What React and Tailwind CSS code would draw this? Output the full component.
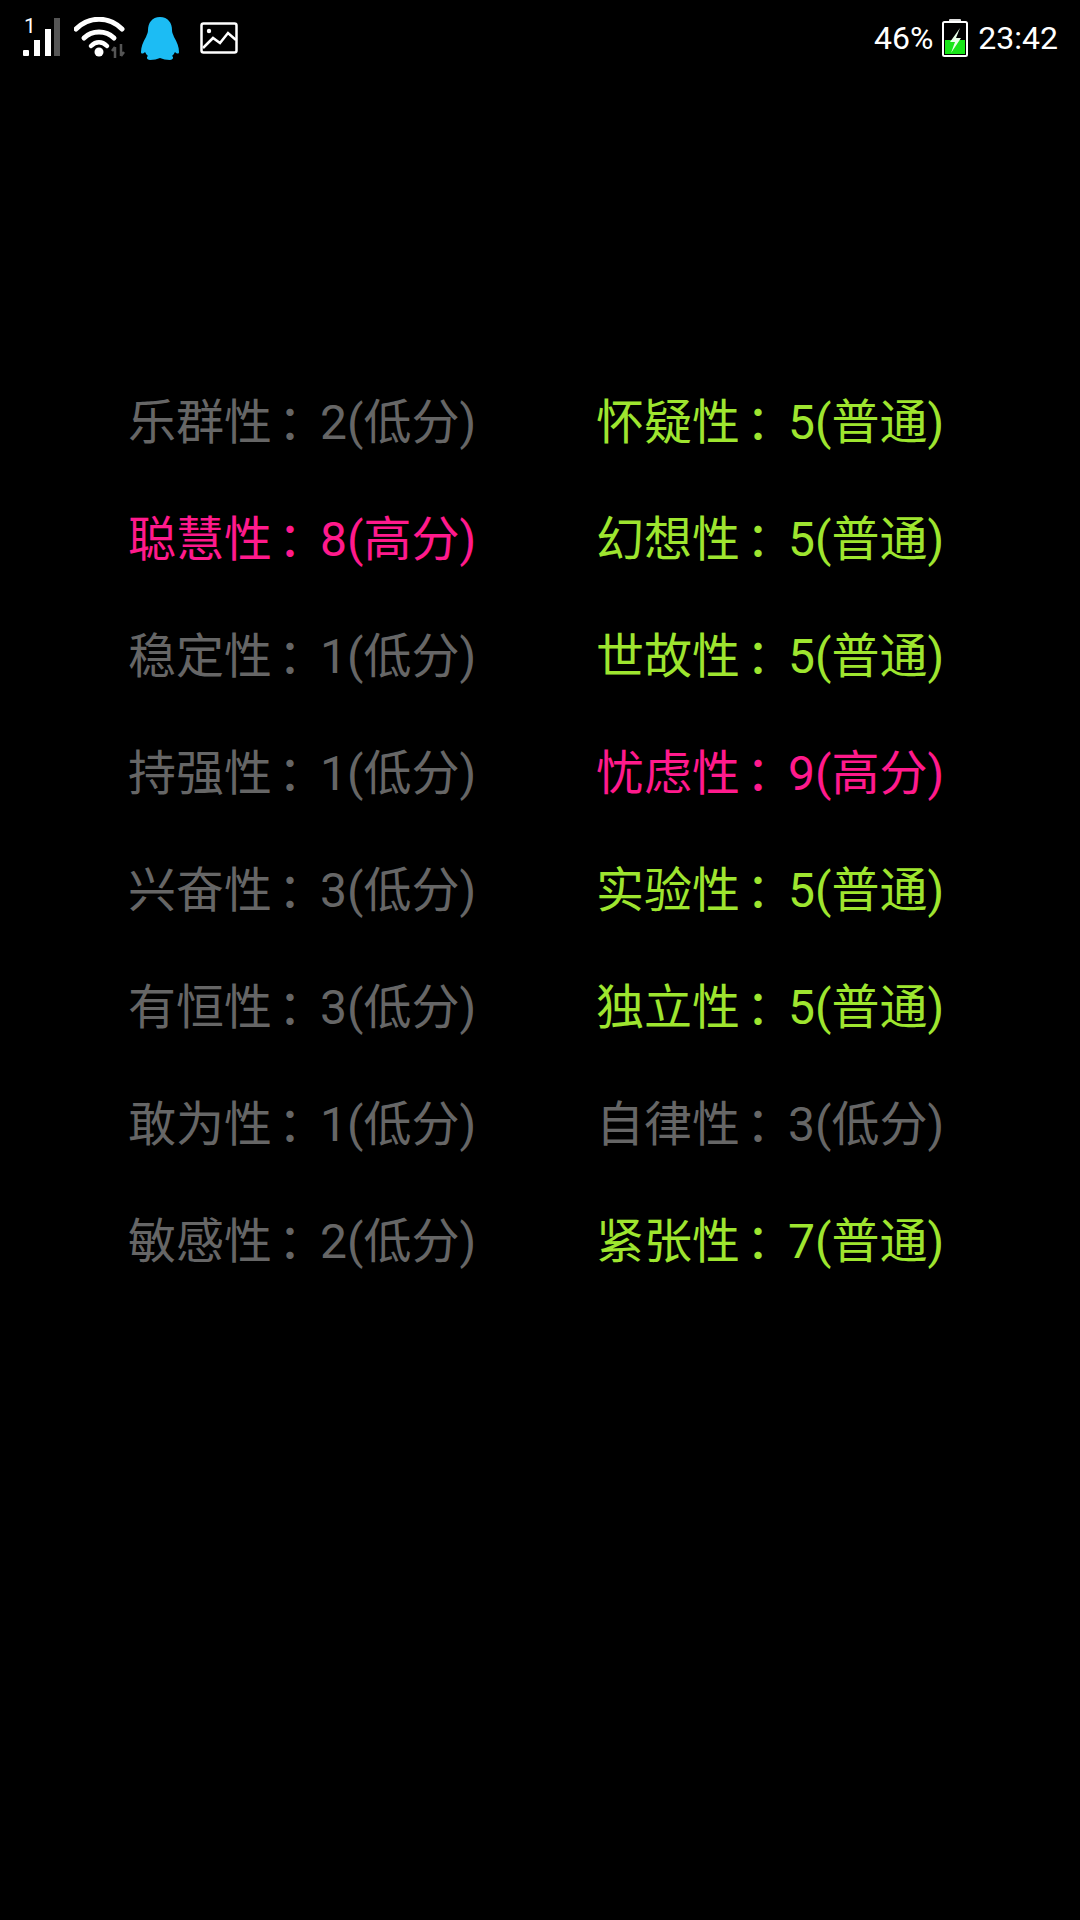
const font = { fontFamily: '"Roboto", "Noto Sans CJK SC", sans-serif' };

const rows = [
  [['乐群性', '2(低分)', 'low'], ['怀疑性', '5(普通)', 'mid']],
  [['聪慧性', '8(高分)', 'high'], ['幻想性', '5(普通)', 'mid']],
  [['稳定性', '1(低分)', 'low'], ['世故性', '5(普通)', 'mid']],
  [['持强性', '1(低分)', 'low'], ['忧虑性', '9(高分)', 'high']],
  [['兴奋性', '3(低分)', 'low'], ['实验性', '5(普通)', 'mid']],
  [['有恒性', '3(低分)', 'low'], ['独立性', '5(普通)', 'mid']],
  [['敢为性', '1(低分)', 'low'], ['自律性', '3(低分)', 'low']],
  [['敏感性', '2(低分)', 'low'], ['紧张性', '7(普通)', 'mid']],
];

const colors = {
  low: 'text-[#666666]',
  mid: 'text-[#9ee52f]',
  high: 'text-[#ff1a8c]',
};

const Signal = () => (
  <svg width="42" height="50" viewBox="0 -4 42 50" className="block">
    <text x="1" y="16" fill="#fff" fontSize="21" style={font}>1</text>
    <rect x="0" y="33" width="6" height="6" rx="1" fill="#fff" />
    <rect x="11" y="23" width="6" height="16" fill="#fff" />
    <rect x="22" y="12" width="6" height="27" fill="#fff" />
    <rect x="31" y="1" width="6" height="38" fill="#555" />
  </svg>
);

const Wifi = () => (
  <svg width="54" height="42" viewBox="0 0 54 42" className="block">
    <path d="M2 12 C15 -1 35 -1 48 12" fill="none" stroke="#fff" strokeWidth="5" strokeLinecap="round" />
    <path d="M10 21 C18 13 32 13 40 21" fill="none" stroke="#fff" strokeWidth="5" strokeLinecap="round" />
    <path d="M17 29 C22 24 28 24 33 29" fill="none" stroke="#fff" strokeWidth="4.5" strokeLinecap="round" />
    <circle cx="25" cy="35" r="4.5" fill="#fff" />
    <path d="M41 41 V30 M38 34 L41 30 M47 27 V39 M47 39 L50 35" fill="none" stroke="#555" strokeWidth="2.5" />
  </svg>
);

const Penguin = () => (
  <svg width="40" height="44" viewBox="0 0 40 44" className="block">
    <path
      d="M20 0 C28 0 32 6 32 13 C32 16 33 17 34 20 C37 25 39 30 39 35 C39 37 37 37 35 35 C34 37 33 38 32 39 C34 40 33 43 30 43 C26 43 23 42 20 41 C17 42 14 43 10 43 C7 43 6 40 8 39 C7 38 6 37 5 35 C3 37 1 37 1 35 C1 30 3 25 6 20 C7 17 8 16 8 13 C8 6 12 0 20 0 Z"
      fill="#1cbcf4"
    />
  </svg>
);

const ImageIcon = () => (
  <svg width="38" height="32" viewBox="0 0 38 32" className="block">
    <rect x="1.5" y="1.5" width="35" height="29" rx="2" fill="none" stroke="#fff" strokeWidth="2.5" />
    <circle cx="9" cy="9" r="2.2" fill="#fff" />
    <path d="M3 26 L13 16 L20 21 L28 11 L36 18" fill="none" stroke="#fff" strokeWidth="2.5" />
  </svg>
);

const Battery = () => (
  <svg width="26" height="38" viewBox="0 0 26 38" className="block">
    <rect x="7" y="0" width="12" height="3" rx="1" fill="#ddd" />
    <rect x="1" y="3" width="24" height="34" rx="1.5" fill="none" stroke="#fff" strokeWidth="2" />
    <rect x="3" y="21" width="20" height="14" fill="#19e619" />
    <path d="M18 9 L8 23 L13 23 L9 34 L19 19 L14 19 Z" fill="#e8ffe8" />
  </svg>
);

export default function App() {
  return (
    <div className="w-[1080px] h-[1920px] bg-black overflow-hidden" style={font}>
      {/* status bar */}
      <div className="h-[75px] flex items-center justify-between pl-[23px] pr-[22px] text-white">
        <div className="flex items-center">
          <Signal />
          <div className="ml-[9px]"><Wifi /></div>
          <div className="ml-[12px] mt-[2px]"><Penguin /></div>
          <div className="ml-[20px]"><ImageIcon /></div>
        </div>
        <div className="flex items-center">
          <span className="text-[32px]">46%</span>
          <div className="ml-[9px]"><Battery /></div>
          <span className="ml-[10px] text-[32px]">23:42</span>
        </div>
      </div>

      {/* score list */}
      <div className="mt-[289px] pl-[128px] flex flex-col">
        {rows.map((row, i) => (
          <div key={i} className="h-[117px] grid grid-cols-[468px_1fr] items-center text-[48px] leading-[117px]">
            {row.map(([name, score, level]) => (
              <div key={name} className={`whitespace-nowrap ${colors[level]}`}>
                {name}<span className="pl-[6px] tracking-[-6px]">：</span>{score}
              </div>
            ))}
          </div>
        ))}
      </div>
    </div>
  );
}
